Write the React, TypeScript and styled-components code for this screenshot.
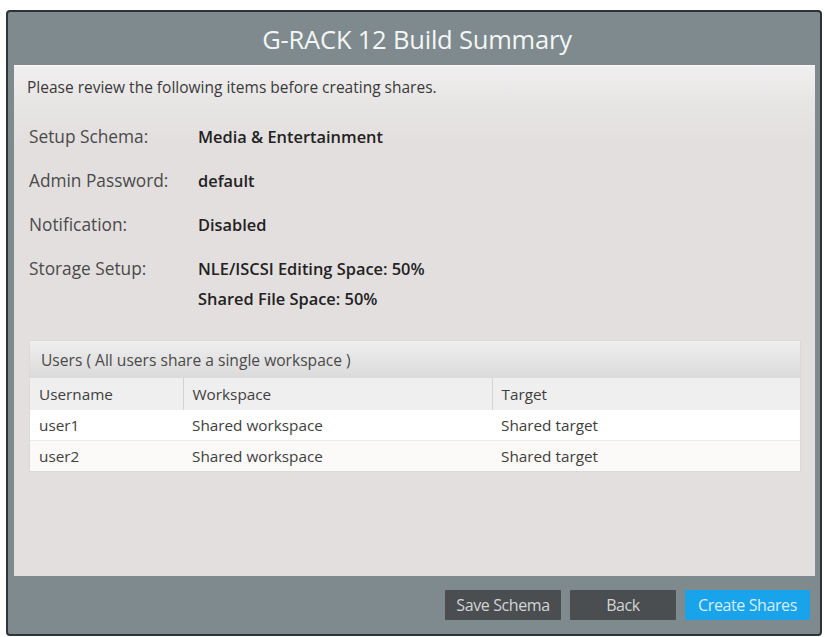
import React from "react";
import styled, { createGlobalStyle } from "styled-components";

const GlobalStyle = createGlobalStyle`
  html, body {
    margin: 0;
    padding: 0;
    background: #ffffff;
  }
  body {
    font-family: "Open Sans", "Noto Sans", sans-serif;
  }
`;

const summary = [
  { label: "Setup Schema:", values: ["Media & Entertainment"] },
  { label: "Admin Password:", values: ["default"] },
  { label: "Notification:", values: ["Disabled"] },
  { label: "Storage Setup:", values: ["NLE/ISCSI Editing Space: 50%", "Shared File Space: 50%"] },
];

const users = [
  { name: "user1", workspace: "Shared workspace", target: "Shared target" },
  { name: "user2", workspace: "Shared workspace", target: "Shared target" },
];

const Page = styled.div`
  padding: 10px 3px 1px 6px;
`;

const Frame = styled.div`
  height: 626px;
  box-sizing: border-box;
  border: 2px solid #2c3436;
  border-radius: 4px;
  background: #7e8a8d;
  display: flex;
  flex-direction: column;
  overflow: hidden;
`;

const Header = styled.div`
  height: 53px;
  display: flex;
  align-items: center;
  justify-content: center;
  padding-left: 6px;
  color: #f4f6f6;
  font-size: 25.5px;
  letter-spacing: -0.2px;
`;

const Content = styled.div`
  flex: 1;
  margin: 0 5px 0 6px;
  background: linear-gradient(#f1efef 0px, #e7e4e4 40px, #e3dfdf 80px);
  display: flex;
  flex-direction: column;
`;

const Intro = styled.div`
  height: 42px;
  padding-left: 13px;
  display: flex;
  align-items: center;
  font-size: 15.5px;
  color: #3a3a3a;
  border-top: 1px solid #fafafa;
  box-sizing: border-box;
`;

const Fields = styled.div`
  display: grid;
  grid-template-columns: 169px 1fr;
  row-gap: 22px;
  padding: 19px 0 0 15px;
  line-height: 22px;
`;

const Label = styled.div`
  font-size: 17.3px;
  color: #4a4a4a;
`;

const Values = styled.div`
  display: flex;
  flex-direction: column;
  gap: 8px;
`;

const Value = styled.div`
  font-size: 16.4px;
  font-weight: 600;
  color: #222;
`;

const UsersBox = styled.div`
  margin: 31px 15px 0 16px;
  background: #ffffff;
  box-shadow: 0 0 0 1px #dcd9d9;
`;

const Caption = styled.div`
  height: 37px;
  display: flex;
  align-items: center;
  padding-left: 11px;
  font-size: 15.6px;
  color: #4a4a4a;
  background: linear-gradient(#efeeee, #dcdbdb);
`;

const Table = styled.table`
  width: 100%;
  border-collapse: collapse;
  table-layout: fixed;
  font-size: 15.3px;
  color: #3e3e3e;
`;

const HeadCell = styled.th<{ $w?: number }>`
  box-sizing: border-box;
  width: ${(p) => (p.$w ? `${p.$w}px` : "auto")};
  height: 32px;
  padding: 0 0 0 9px;
  text-align: left;
  font-weight: 400;
  background: #f0efef;
  border-left: 1px solid #d4d2d2;
  &:first-child {
    border-left: none;
    padding-left: 9px;
  }
`;

const Row = styled.tr<{ $alt?: boolean }>`
  background: ${(p) => (p.$alt ? "#fcf9f9" : "#ffffff")};
  border-top: ${(p) => (p.$alt ? "1px solid #eeeaea" : "none")};
`;

const Cell = styled.td`
  height: 30px;
  padding: 0 0 0 9px;
`;

const Footer = styled.div`
  height: 58px;
  display: flex;
  align-items: center;
  justify-content: flex-end;
  gap: 9px;
  padding-right: 10px;
`;

const Button = styled.button<{ $primary?: boolean; $w: number }>`
  width: ${(p) => p.$w}px;
  height: 30px;
  border: none;
  border-radius: 1px;
  padding: 0;
  font-family: "Open Sans", "Noto Sans", sans-serif;
  font-size: 16px;
  letter-spacing: -0.4px;
  background: ${(p) => (p.$primary ? "#19a3eb" : "#4a4e50")};
  color: ${(p) => (p.$primary ? "#d6eefb" : "#d2d4d5")};
  cursor: pointer;
`;

export default function App() {
  return (
    <>
      <GlobalStyle />
      <Page>
        <Frame>
          <Header>G-RACK 12 Build Summary</Header>
          <Content>
            <Intro>Please review the following items before creating shares.</Intro>
            <Fields>
              {summary.map((item) => (
                <React.Fragment key={item.label}>
                  <Label>{item.label}</Label>
                  <Values>
                    {item.values.map((v) => (
                      <Value key={v}>{v}</Value>
                    ))}
                  </Values>
                </React.Fragment>
              ))}
            </Fields>
            <UsersBox>
              <Caption>Users ( All users share a single workspace )</Caption>
              <Table>
                <thead>
                  <tr>
                    <HeadCell $w={153}>Username</HeadCell>
                    <HeadCell $w={309}>Workspace</HeadCell>
                    <HeadCell>Target</HeadCell>
                  </tr>
                </thead>
                <tbody>
                  {users.map((u, i) => (
                    <Row key={u.name} $alt={i % 2 === 1}>
                      <Cell>{u.name}</Cell>
                      <Cell>{u.workspace}</Cell>
                      <Cell>{u.target}</Cell>
                    </Row>
                  ))}
                </tbody>
              </Table>
            </UsersBox>
          </Content>
          <Footer>
            <Button $w={116}>Save Schema</Button>
            <Button $w={106}>Back</Button>
            <Button $w={125} $primary>Create Shares</Button>
          </Footer>
        </Frame>
      </Page>
    </>
  );
}
